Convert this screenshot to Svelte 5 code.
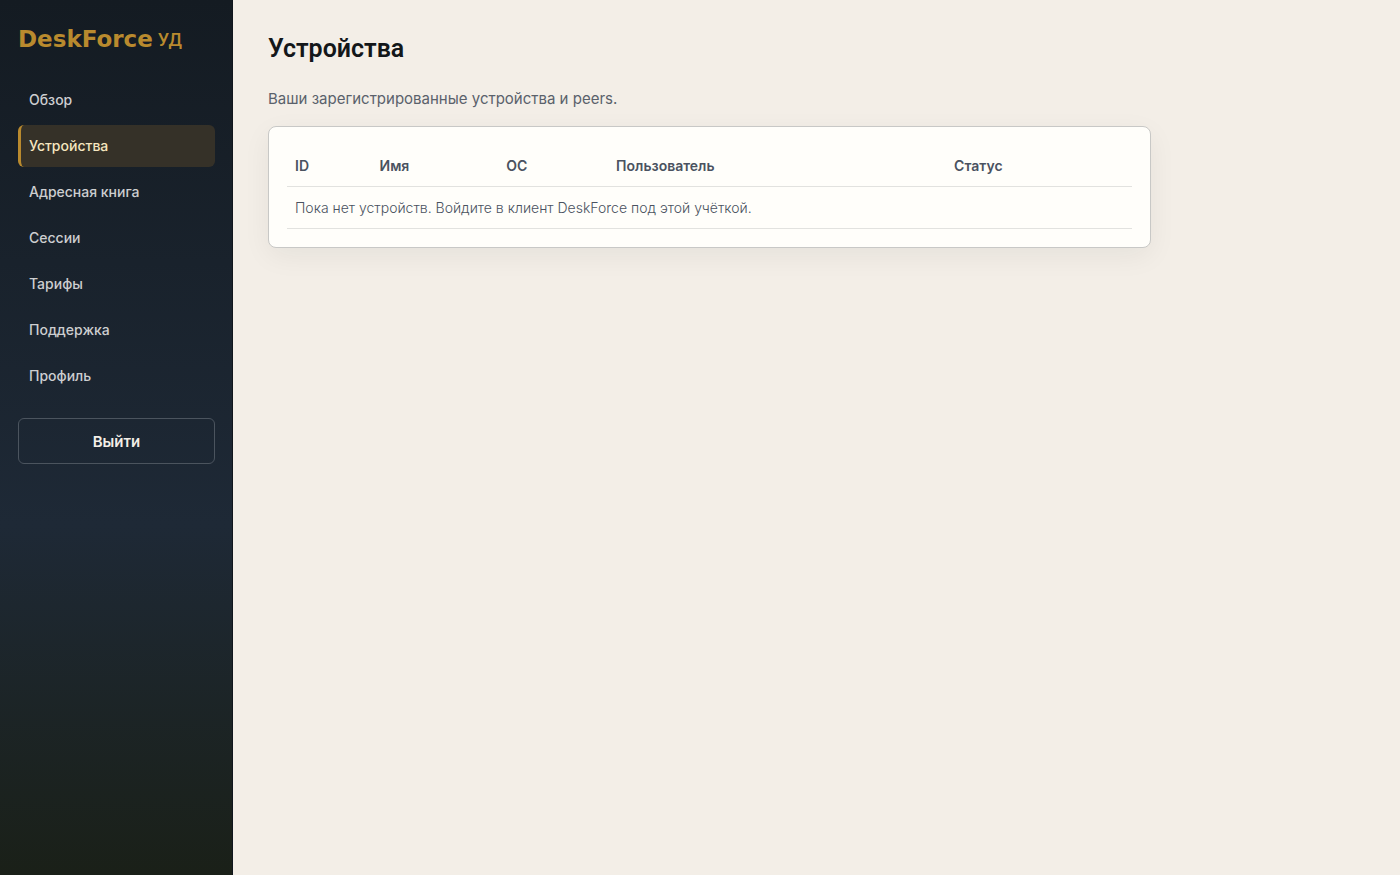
<script>
  const links = [
    { label: "Обзор", href: "#overview" },
    { label: "Устройства", href: "#devices" },
    { label: "Адресная книга", href: "#address-book" },
    { label: "Сессии", href: "#sessions" },
    { label: "Тарифы", href: "#plans" },
    { label: "Поддержка", href: "#support" },
    { label: "Профиль", href: "#profile" }
  ];

  const columns = [
    { label: "ID", cls: "col-id" },
    { label: "Имя", cls: "col-name" },
    { label: "ОС", cls: "col-os" },
    { label: "Пользователь", cls: "col-user" },
    { label: "Статус", cls: "col-status" }
  ];

  let current = $state("#devices");
</script>

<div class="layout">
  <aside>
    <div class="brand"><span class="name">DeskForce</span> УД</div>
    <nav>
      {#each links as link}
        <a
          href={link.href}
          class:active={current === link.href}
          onclick={() => (current = link.href)}>{link.label}</a>
      {/each}
    </nav>
    <button type="button">Выйти</button>
  </aside>

  <main>
    <h1>Устройства</h1>
    <p>Ваши зарегистрированные устройства и peers.</p>
    <section class="card">
      <table>
        <thead>
          <tr>
            {#each columns as col}
              <th class={col.cls}>{col.label}</th>
            {/each}
          </tr>
        </thead>
        <tbody>
          <tr>
            <td colspan="5">Пока нет устройств. Войдите в клиент DeskForce под этой учёткой.</td>
          </tr>
        </tbody>
      </table>
    </section>
  </main>
</div>

<style>
  :global(body) {
    margin: 0;
    background: #f3eee7;
    font-family: Inter, "Open Sans", sans-serif;
  }

  .layout {
    display: grid;
    grid-template-columns: 233px 1fr;
    min-height: 100vh;
  }

  aside {
    box-sizing: border-box;
    padding: 24px 18px;
    background: linear-gradient(180deg, #141b22 0%, #1e2936 60%, #1a2018 100%);
    box-shadow: inset -1px 0 #10161d;
  }

  .brand {
    display: flex;
    align-items: center;
    gap: 5px;
    height: 30px;
    margin-bottom: 25px;
    color: #b98a2e;
    font-family: Roboto, sans-serif;
    font-size: 18px;
    font-weight: 500;
    white-space: nowrap;
  }

  .name {
    font-family: "DejaVu Sans", sans-serif;
    font-size: 23px;
    font-weight: 700;
  }

  nav {
    display: flex;
    flex-direction: column;
    gap: 4px;
    margin-bottom: 21px;
  }

  nav a {
    padding: 11px 12px 11px 8px;
    border-left: 3px solid transparent;
    border-radius: 6px;
    color: #cdced0;
    font-size: 14px;
    font-weight: 500;
    line-height: 20px;
    text-decoration: none;
  }

  nav a.active {
    border-left-color: #b98a2e;
    background: #353128;
    color: #f5e6bf;
  }

  button {
    width: 100%;
    height: 46px;
    border: 1px solid #4b545e;
    border-radius: 6px;
    background: transparent;
    color: #f3eee7;
    font-family: inherit;
    font-size: 15px;
    font-weight: 600;
    cursor: pointer;
  }

  main {
    box-sizing: border-box;
    width: 100%;
    max-width: 953px;
    padding: 32px 35px;
  }

  h1 {
    margin: 0 0 21px;
    color: #13171a;
    font-family: Roboto, "Liberation Sans", sans-serif;
    font-size: 25px;
    font-weight: 600;
    line-height: 34px;
  }

  p {
    margin: 0 0 15px;
    color: #5a616b;
    font-size: 15px;
    line-height: 24px;
  }

  .card {
    padding: 18px;
    border: 1px solid #c8c8c6;
    border-radius: 8px;
    background: #fffefa;
    box-shadow: 0 8px 28px rgba(20, 27, 34, 0.06);
  }

  table {
    width: 100%;
    border-collapse: collapse;
    table-layout: fixed;
    color: #4a5260;
    font-size: 14px;
    line-height: 20px;
    text-align: left;
  }

  th,
  td {
    box-sizing: border-box;
    padding: 11px 8px 10px;
    border-bottom: 1px solid #e2e2df;
  }

  th {
    font-weight: 600;
  }

  td {
    font-weight: 300;
  }

  .col-id {
    width: 10%;
  }

  .col-name {
    width: 15%;
  }

  .col-os {
    width: 13%;
  }

  .col-user {
    width: 40%;
  }

  .col-status {
    width: 22%;
  }
</style>
